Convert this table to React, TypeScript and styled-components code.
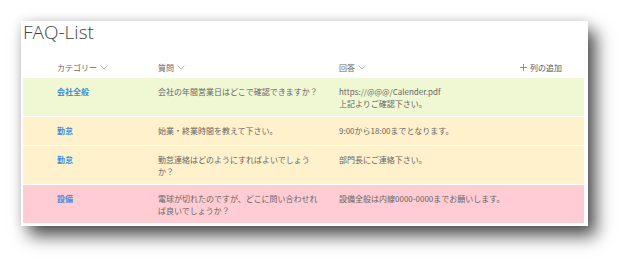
import * as React from "react";
import styled, { createGlobalStyle } from "styled-components";

type Tone = "green" | "cream" | "pink";

type Item = {
  category: string;
  question: string;
  answer: string[];
  tone: Tone;
};

const items: Item[] = [
  {
    category: "会社全般",
    question: "会社の年間営業日はどこで確認できますか？",
    answer: ["https://@@@/Calender.pdf", "上記よりご確認下さい。"],
    tone: "green",
  },
  {
    category: "勤怠",
    question: "始業・終業時間を教えて下さい。",
    answer: ["9:00から18:00までとなります。"],
    tone: "cream",
  },
  {
    category: "勤怠",
    question: "勤怠連絡はどのようにすればよいでしょうか？",
    answer: ["部門長にご連絡下さい。"],
    tone: "cream",
  },
  {
    category: "設備",
    question: "電球が切れたのですが、どこに問い合わせれば良いでしょうか？",
    answer: ["設備全般は内線0000-0000までお願いします。"],
    tone: "pink",
  },
];

const toneColors: Record<Tone, string> = {
  green: "#f0f7d3",
  cream: "#fff1cc",
  pink: "#ffccd4",
};

const Chevron = () => (
  <ChevronIcon viewBox="0 0 8 5" width="8" height="5">
    <polyline points="0.5,0.5 4,4 7.5,0.5" fill="none" stroke="#a6a6a6" strokeWidth="0.8" />
  </ChevronIcon>
);

const Plus = () => (
  <svg viewBox="0 0 7 7" width="7" height="7">
    <path d="M3.5 0v7M0 3.5h7" stroke="#777" strokeWidth="0.8" />
  </svg>
);

const App = () => {
  return (
    <>
      <GlobalStyle />
      <Page>
        <Card>
          <Title>FAQ-List</Title>
          <HeaderRow>
            <span />
            <HeaderCell>
              カテゴリー <Chevron />
            </HeaderCell>
            <HeaderCell>
              質問 <Chevron />
            </HeaderCell>
            <HeaderCell>
              回答 <Chevron />
            </HeaderCell>
            <AddColumn>
              <Plus />
              列の追加
            </AddColumn>
          </HeaderRow>
          <Rows>
            {items.map((item, i) => (
              <Row key={i} tone={item.tone}>
                <span />
                <CategoryLink>{item.category}</CategoryLink>
                <Cell>{item.question}</Cell>
                <Cell>
                  {item.answer.map((line, j) => (
                    <div key={j}>{line}</div>
                  ))}
                </Cell>
              </Row>
            ))}
          </Rows>
        </Card>
      </Page>
    </>
  );
};

const GlobalStyle = createGlobalStyle`
  html, body {
    margin: 0;
    padding: 0;
    background: #ffffff;
  }
  body {
    font-family: "Noto Sans CJK JP", "Open Sans", sans-serif;
  }
`;

const Page = styled.div`
  width: 630px;
  height: 269px;
  padding: 21px 0 0 21px;
  box-sizing: border-box;
  overflow: hidden;
`;

const Card = styled.div`
  width: 567px;
  box-sizing: border-box;
  padding: 0 4px 3px 2px;
  background: #ffffff;
  box-shadow: 8px 10px 16px rgba(0, 0, 0, 0.68), 0 0 10px rgba(0, 0, 0, 0.12);
`;

const Title = styled.div`
  height: 35px;
  line-height: 23px;
  font-family: "Open Sans", "Noto Sans", sans-serif;
  font-weight: 300;
  font-size: 19px;
  color: #454545;
`;

const grid = `
  display: grid;
  grid-template-columns: 34px 101px 181px 1fr;
`;

const HeaderRow = styled.div`
  ${grid}
  grid-template-columns: 34px 101px 181px 1fr auto;
  height: 22px;
  align-items: center;
  font-size: 8px;
  color: #666;
  padding-right: 22px;
`;

const HeaderCell = styled.div`
  display: flex;
  align-items: center;
  gap: 2px;
`;

const ChevronIcon = styled.svg`
  margin-left: 1px;
`;

const AddColumn = styled.div`
  display: flex;
  align-items: center;
  gap: 3px;
  color: #555;
`;

const Rows = styled.div`
  display: flex;
  flex-direction: column;
  gap: 1px;
`;

const Row = styled.div<{ tone: Tone }>`
  ${grid}
  box-sizing: border-box;
  min-height: 28px;
  padding: 8px 0 6px;
  background: ${(p) => toneColors[p.tone]};
  font-size: 8px;
  line-height: 12px;
  color: #666;
`;

const CategoryLink = styled.div`
  color: #3a8ee0;
  font-weight: 700;
`;

const Cell = styled.div`
  max-width: 166px;
  white-space: normal;
  &:last-child {
    max-width: none;
  }
`;

export default App;
